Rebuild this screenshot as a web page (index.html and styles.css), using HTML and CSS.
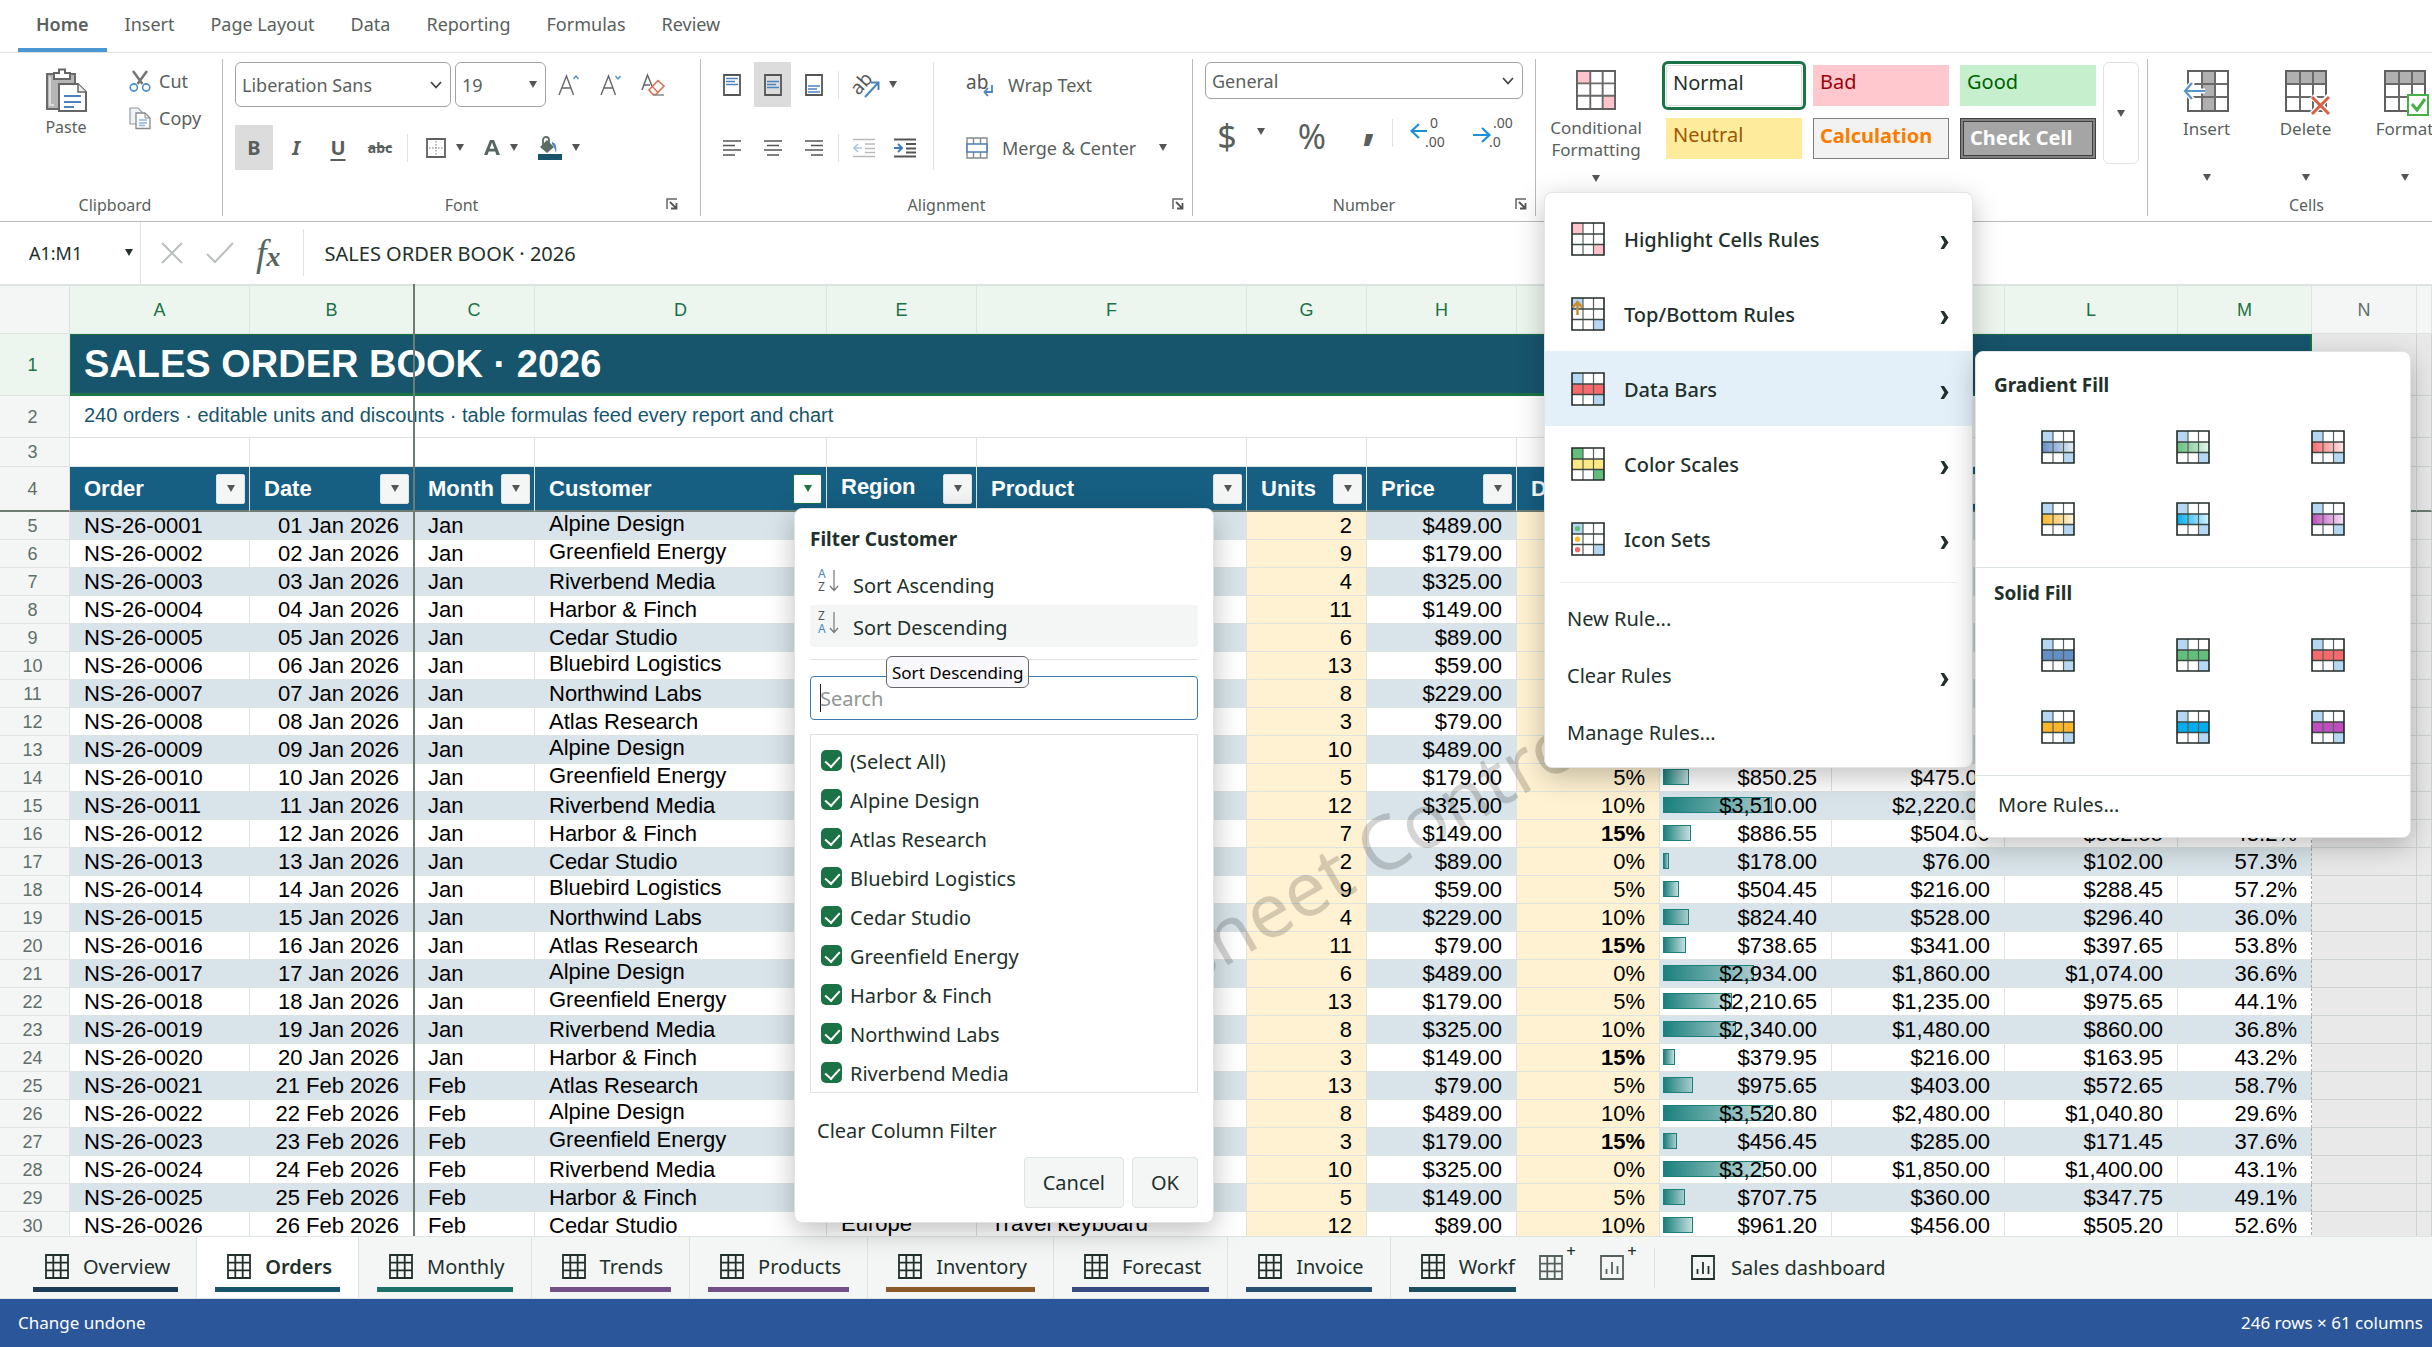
FILE: index.html
```html
<!DOCTYPE html>
<html lang="en">
<head>
<meta charset="utf-8">
<title>Sales order book</title>
<link rel="stylesheet" href="styles.css">
</head>
<body>
<svg class="defs" aria-hidden="true">
  <defs>
    <symbol id="sheet" viewBox="0 0 24 25"><path d="M1 1h22v23H1zM1 8.700h22M1 16.300h22M8.300 1v23M15.700 1v23" fill="none" stroke="currentColor" stroke-width="1.800"/></symbol>
    <symbol id="chart" viewBox="0 0 24 25"><path d="M1 1h22v23H1z" fill="none" stroke="currentColor" stroke-width="1.800"/><path d="M6.500 19v-5M12 19V7M17.500 19v-8" stroke="currentColor" stroke-width="1.800"/></symbol>
    <symbol id="rules" viewBox="0 0 34 34"><path d="M12 1v32M22.500 1v32" stroke="#56605c" stroke-width="1.200" fill="none"/><path d="M1 12h32M1 22.500h32" stroke="#3b4743" stroke-width="1.600" fill="none"/><path d="M1 1h32v32H1z" fill="none" stroke="#222b28" stroke-width="1.600"/></symbol>
    <symbol id="cells" viewBox="0 0 42 42"><path d="M15 1v40M28 1v40M1 14h40M1 27h40" stroke="#6a6a6a" stroke-width="2" fill="none"/><path d="M1 1h40v40H1z" fill="none" stroke="#606060" stroke-width="2"/></symbol>
    <symbol id="launch" viewBox="0 0 12 12"><path d="M1 11V1h10" fill="none" stroke="#666" stroke-width="1.500"/><path d="M4 4l6 6M10.500 5v5.500H5" fill="none" stroke="#555" stroke-width="1.800"/></symbol>
    <symbol id="down" viewBox="0 0 12 8"><path d="M1 1l5 5.500L11 1" fill="none" stroke="#444" stroke-width="1.800"/></symbol>
    <symbol id="next" viewBox="0 0 9 13"><path d="M0.500 0h3.500l4.500 6.500L4 13H0.500l3.800-6.500z" fill="#22302b"/></symbol>
  </defs>
</svg>

<div class="app">
  <nav class="tabs" aria-label="Ribbon">
    <button class="tab active">Home</button>
    <button class="tab">Insert</button>
    <button class="tab">Page Layout</button>
    <button class="tab">Data</button>
    <button class="tab">Reporting</button>
    <button class="tab">Formulas</button>
    <button class="tab">Review</button>
  </nav>

  <div class="ribbon">
    <section class="group clipboard">
      <div class="tools">
        <button class="big paste">
          <svg width="42" height="44" viewBox="0 0 42 44"><path d="M2 6h28v35H2z" fill="#b5b5b5" stroke="#6a6a6a" stroke-width="2"/><path d="M5 9v28h4" fill="none" stroke="#dcdcdc" stroke-width="2"/><path d="M9 11V5h5V1.500h6V5h5v6z" fill="#fff" stroke="#666" stroke-width="2"/><path d="M14 16h19l8 8v19H14z" fill="#fff" stroke="#666" stroke-width="2"/><path d="M33 16v8h8" fill="#ececec" stroke="#666" stroke-width="1.500"/><path d="M19 28h17M19 34h17M19 39h10" stroke="#4a84bd" stroke-width="2"/></svg>
          <span>Paste</span>
        </button>
        <div class="stack">
          <button class="flat"><svg width="22" height="22" viewBox="0 0 22 22"><path d="M4 1l9.500 13M18 1L8.500 14" stroke="#777" stroke-width="2.600"/><circle cx="4.800" cy="17.500" r="3.600" fill="#fff" stroke="#4a8acb" stroke-width="1.600"/><circle cx="17.200" cy="17.500" r="3.600" fill="#fff" stroke="#4a8acb" stroke-width="1.600"/></svg><span>Cut</span></button>
          <button class="flat"><svg width="22" height="22" viewBox="0 0 22 22"><path d="M1 1h8l4 4v12H1z" fill="#eef3f7" stroke="#999" stroke-width="1.200"/><path d="M7 6h9l5 5v10.500H7z" fill="#fff" stroke="#888" stroke-width="1.300"/><path d="M16 6v5h5" fill="none" stroke="#888"/><path d="M10 13h8M10 16h8M10 18.500h6" stroke="#8db4e0" stroke-width="1.300"/></svg><span>Copy</span></button>
        </div>
      </div>
      <div class="caption"><span>Clipboard</span></div>
    </section>

    <section class="group font">
      <div class="tools rows">
        <div class="row">
          <span class="pick name"><select aria-label="Font name"><option>Liberation Sans</option></select><svg class="arrow" width="12" height="8"><use href="#down"/></svg></span>
          <span class="pick size"><select aria-label="Font size"><option>19</option></select><i class="caret arrow"></i></span>
          <button class="icon" aria-label="Grow font"><svg width="22" height="22" viewBox="0 0 22 22"><path d="M1 21L8.500 2 15.500 21M3.500 14h10" fill="none" stroke="#666" stroke-width="1.400"/><path d="M15.500 5L18 2l2.500 3" fill="none" stroke="#4a8acb" stroke-width="1.300"/></svg></button>
          <button class="icon" aria-label="Shrink font"><svg width="22" height="22" viewBox="0 0 22 22"><path d="M1 21L8.500 2 15.500 21M3.500 14h10" fill="none" stroke="#666" stroke-width="1.400"/><path d="M15.500 2L18 5l2.500-3" fill="none" stroke="#4a8acb" stroke-width="1.300"/></svg></button>
          <button class="icon" aria-label="Clear formatting"><svg width="24" height="22" viewBox="0 0 24 22"><path d="M1 16L6.500 1 11 12M3 11h6" fill="none" stroke="#666" stroke-width="1.500"/><path d="M8 16l9-9.500 6 5.500-8 8.500h-3z" fill="#fff" stroke="#dd6a4c" stroke-width="1.500"/><path d="M11 12l5.500 6" stroke="#dd6a4c" stroke-width="1.300"/><path d="M12 21h11" stroke="#888" stroke-width="1.500"/></svg></button>
        </div>
        <div class="row">
          <button class="icon on" aria-label="Bold"><b>B</b></button>
          <button class="icon" aria-label="Italic"><b><em>I</em></b></button>
          <button class="icon" aria-label="Underline"><b class="under">U</b></button>
          <button class="icon" aria-label="Strikethrough"><b class="strike">abc</b></button>
          <i class="rule"></i>
          <button class="split" aria-label="Borders"><svg width="20" height="20" viewBox="0 0 20 20"><path d="M1 1h18v18H1z" fill="none" stroke="#606060" stroke-width="1.800"/><path d="M10 3v15M3 10h15" stroke="#777" stroke-dasharray="1.500 1.500"/></svg><i class="caret"></i></button>
          <button class="split" aria-label="Font color"><svg width="16" height="20" viewBox="0 0 16 20"><path d="M0 17L6 2h4l6 15h-3.600l-1.200-3.400H4.700L3.500 17zM5.700 10.800h4.600L8 4.600z" fill="#56665f"/></svg><i class="caret"></i></button>
          <button class="split" aria-label="Fill color"><svg width="24" height="24" viewBox="0 0 24 24"><path d="M2 11l7-7 7 7-7 6z" fill="#5d6b65"/><path d="M5 9V4a3 3 0 0 1 6 0v6" fill="none" stroke="#5d6b65" stroke-width="1.800"/><path d="M14 6c4 1 5 5 4 11-1-3-2-7-4-9z" fill="#4a84c8"/><path d="M0 18h24v6H0z" fill="#17556d"/></svg><i class="caret"></i></button>
        </div>
      </div>
      <div class="caption"><span>Font</span><svg width="12" height="12"><use href="#launch"/></svg></div>
    </section>

    <section class="group align">
      <div class="tools">
        <div class="rows">
          <div class="row">
            <button class="icon" aria-label="Top align"><svg width="18" height="22" viewBox="0 0 18 22"><path d="M1 1h16v20H1z" fill="#fff" stroke="#555" stroke-width="1.800"/><path d="M3 4.500h12M3 7.500h9M3 10.500h12" stroke="#4a84bd" stroke-width="1.500"/></svg></button>
            <button class="icon on" aria-label="Middle align"><svg width="18" height="22" viewBox="0 0 18 22"><path d="M1 1h16v20H1z" fill="none" stroke="#555" stroke-width="1.800"/><path d="M3 7.500h12M3 10.500h9M3 13.500h12" stroke="#4a84bd" stroke-width="1.500"/></svg></button>
            <button class="icon" aria-label="Bottom align"><svg width="18" height="22" viewBox="0 0 18 22"><path d="M1 1h16v20H1z" fill="#fff" stroke="#555" stroke-width="1.800"/><path d="M3 12h12M3 15h9M3 18h12" stroke="#4a84bd" stroke-width="1.500"/></svg></button>
            <i class="rule"></i>
            <button class="split" aria-label="Orientation"><svg width="26" height="26" viewBox="0 0 26 26"><text x="2" y="22" transform="rotate(-48 6 19)" class="glyph">ab</text><path d="M12 25L25 11M18 10.500h7.500V18" fill="none" stroke="#4a84bd" stroke-width="2"/></svg><i class="caret"></i></button>
          </div>
          <div class="row">
            <button class="icon" aria-label="Align left"><svg width="18" height="18" viewBox="0 0 18 18"><path d="M0 2h18M0 6.500h12M0 11h18M0 16h12" stroke="#555" stroke-width="1.700"/></svg></button>
            <button class="icon" aria-label="Center"><svg width="18" height="18" viewBox="0 0 18 18"><path d="M0 2h18M3 6.500h12M0 11h18M3 16h12" stroke="#555" stroke-width="1.700"/></svg></button>
            <button class="icon" aria-label="Align right"><svg width="18" height="18" viewBox="0 0 18 18"><path d="M0 2h18M6 6.500h12M0 11h18M6 16h12" stroke="#555" stroke-width="1.700"/></svg></button>
            <i class="rule"></i>
            <button class="icon" disabled aria-label="Decrease indent"><svg width="22" height="20" viewBox="0 0 22 20"><path d="M0 1.500h22M12 6h10M12 10.500h10M12 14.500h10M0 18.500h22" stroke="#bbb" stroke-width="1.600"/><path d="M9 10H1.500M5 6l-4 4 4 4" fill="none" stroke="#a9c6e2" stroke-width="1.600"/></svg></button>
            <button class="icon" aria-label="Increase indent"><svg width="22" height="20" viewBox="0 0 22 20"><path d="M0 1.500h22M12 6h10M12 10.500h10M12 14.500h10M0 18.500h22" stroke="#555" stroke-width="1.800"/><path d="M0 10h7.500M4 6l4 4-4 4" fill="none" stroke="#3a78bb" stroke-width="1.900"/></svg></button>
          </div>
        </div>
        <i class="rule tall"></i>
        <div class="rows wide">
          <button class="flat wrap"><svg width="28" height="26" viewBox="0 0 28 26"><text x="0" y="17" class="glyph">ab</text><path d="M26 13v7h-6M22 16l-3.500 4 3.500 4" fill="none" stroke="#4a84bd" stroke-width="1.800"/></svg><span>Wrap Text</span></button>
          <button class="flat"><svg width="22" height="22" viewBox="0 0 22 22"><path d="M1 1h20v20H1zM7.500 1v20M14.500 1v20" fill="none" stroke="#888" stroke-width="1.400"/><path d="M1 7h20v8H1z" fill="#fff" stroke="#4f7fb5" stroke-width="1.600"/></svg><span>Merge &amp; Center</span><i class="caret"></i></button>
        </div>
      </div>
      <div class="caption"><span>Alignment</span><svg width="12" height="12"><use href="#launch"/></svg></div>
    </section>

    <section class="group number">
      <div class="tools rows">
        <span class="pick format"><select aria-label="Number format"><option>General</option></select><svg class="arrow" width="12" height="8"><use href="#down"/></svg></span>
        <div class="row">
          <button class="sym">$</button><i class="caret"></i>
          <button class="sym">%</button>
          <button class="sym comma">,</button>
          <i class="rule"></i>
          <button class="dec" aria-label="Increase decimal"><svg width="36" height="34" viewBox="0 0 36 34"><path d="M17 16H2M9 9l-7.500 7L9 23" fill="none" stroke="#1e90d8" stroke-width="2.200"/><text x="20" y="13" class="tiny">0</text><text x="15" y="32" class="tiny">.00</text></svg></button>
          <button class="dec" aria-label="Decrease decimal"><svg width="40" height="34" viewBox="0 0 40 34"><path d="M0 20h15M9 13l7.500 7L9 27" fill="none" stroke="#1e90d8" stroke-width="2.200"/><text x="20" y="13" class="tiny">.00</text><text x="16" y="32" class="tiny">.0</text></svg></button>
        </div>
      </div>
      <div class="caption"><span>Number</span><svg width="12" height="12"><use href="#launch"/></svg></div>
    </section>

    <section class="group styles">
      <button class="big cond">
        <svg width="40" height="42" viewBox="0 0 42 42"><path d="M1 1h14v13H1zM28 27h13v14H28z" fill="#ffc3cb"/><use href="#cells"/></svg>
        <span>Conditional<br>Formatting</span><i class="caret"></i>
      </button>
      <div class="gallery">
        <button class="chip normal"><span>Normal</span></button>
        <button class="chip bad"><span>Bad</span></button>
        <button class="chip good"><span>Good</span></button>
        <button class="chip neutral"><span>Neutral</span></button>
        <button class="chip calc"><span>Calculation</span></button>
        <button class="chip check"><span>Check Cell</span></button>
      </div>
      <button class="more" aria-label="More styles"><i class="caret"></i></button>
    </section>

    <section class="group cellops">
      <div class="tools">
        <button class="big op"><svg width="48" height="46" viewBox="-4 0 48 46"><path d="M15 1h13v40H15z" fill="#b0b0b0"/><use href="#cells" width="42" height="42"/><path d="M18 21H-1M6 12l-8 9 8 9" fill="none" stroke="#fff" stroke-width="5"/><path d="M18 21H-1M5 13l-7 8 7 8" fill="none" stroke="#5b93cf" stroke-width="2.200"/></svg><span>Insert</span><i class="caret"></i></button>
        <button class="big op"><svg width="48" height="46" viewBox="-3 0 48 46"><path d="M1 1h40v13H1z" fill="#b0b0b0"/><use href="#cells" width="42" height="42"/><path d="M27 26l17 18M44 26L27 44" stroke="#fff" stroke-width="6"/><path d="M27 27l17 17M44 27L27 44" stroke="#d95f43" stroke-width="3"/></svg><span>Delete</span><i class="caret"></i></button>
        <button class="big op"><svg width="48" height="46" viewBox="-3 0 48 46"><path d="M1 1h40v13H1z" fill="#b0b0b0"/><use href="#cells" width="42" height="42"/><path d="M24 25h20v20H24z" fill="#fff" stroke="#45b045" stroke-width="2"/><path d="M28 34l5 6 8-11" fill="none" stroke="#45b045" stroke-width="3"/></svg><span>Format</span><i class="caret"></i></button>
      </div>
      <div class="caption"><span>Cells</span></div>
    </section>
  </div>

  <div class="formula">
    <label class="namebox"><input aria-label="Name box" value="A1:M1"><i class="caret"></i></label>
    <div class="fx">
      <button aria-label="Cancel entry"><svg width="24" height="22" viewBox="0 0 24 22"><path d="M2 1l20 20M22 1L2 21" stroke="#b9bfbc" stroke-width="2"/></svg></button>
      <button aria-label="Confirm entry"><svg width="28" height="22" viewBox="0 0 28 22"><path d="M1 12l8 8L27 1" fill="none" stroke="#b9bfbc" stroke-width="2"/></svg></button>
      <button class="fn" aria-label="Insert function"><em>f</em><sub>x</sub></button>
    </div>
    <input class="entry" aria-label="Formula" value="SALES ORDER BOOK · 2026">
  </div>

  <main class="sheet">
    <table class="grid">
      <colgroup><col class="w-head"><col class="w-a"><col class="w-b"><col class="w-c"><col class="w-d"><col class="w-e"><col class="w-f"><col class="w-g"><col class="w-h"><col class="w-i"><col class="w-j"><col class="w-k"><col class="w-k"><col class="w-m"><col class="w-n"><col></colgroup>
      <thead><tr class="letters"><th class="corner"></th><th>A</th><th>B</th><th>C</th><th>D</th><th>E</th><th>F</th><th>G</th><th>H</th><th>I</th><th>J</th><th>K</th><th>L</th><th>M</th><th class="off">N</th><th class="off"></th></tr></thead>
      <tbody id="rows">
        <tr class="r1"><th class="sel">1</th><td colspan="13" class="title">SALES ORDER BOOK · 2026</td><td class="out"></td><td class="out"></td></tr>
        <tr class="r2"><th>2</th><td colspan="13" class="sub">240 orders · editable units and discounts · table formulas feed every report and chart</td><td class="out"></td><td class="out"></td></tr>
        <tr class="r3"><th>3</th><td></td><td></td><td></td><td></td><td></td><td></td><td></td><td></td><td></td><td></td><td></td><td></td><td></td><td class="out"></td><td class="out"></td></tr>
      </tbody>
    </table>
    <i class="freeze"></i>
    <svg class="watermark"><text x="977" y="826" transform="rotate(-30 977 826)">Spreadsheet Control</text></svg>
  </main>

  <nav class="sheets" aria-label="Sheets">
    <div class="strip" id="strip"></div>
    <button class="add" aria-label="Add sheet"><svg width="24" height="25"><use href="#sheet"/></svg><sup>+</sup></button>
    <button class="add" aria-label="Add chart sheet"><svg width="24" height="25"><use href="#chart"/></svg><sup>+</sup></button>
    <i class="rule"></i>
    <button class="dash"><svg width="24" height="25"><use href="#chart"/></svg><span>Sales dashboard</span></button>
  </nav>

  <footer class="status"><span>Change undone</span><span>246 rows × 61 columns</span></footer>

  <form class="filter popup">
    <h2>Filter Customer</h2>
    <button type="button" class="sort"><svg width="22" height="24" viewBox="0 0 22 24"><text x="0" y="9" class="az blue">A</text><text x="0" y="22" class="az">Z</text><path d="M16 1v20M12 17l4 4.500 4-4.500" fill="none" stroke="#777" stroke-width="1.200"/></svg>Sort Ascending</button>
    <button type="button" class="sort hover"><svg width="22" height="24" viewBox="0 0 22 24"><text x="0" y="9" class="az">Z</text><text x="0" y="22" class="az blue">A</text><path d="M16 1v20M12 17l4 4.500 4-4.500" fill="none" stroke="#777" stroke-width="1.200"/></svg>Sort Descending</button>
    <hr>
    <input class="search" type="text" placeholder="Search" aria-label="Search">
    <div class="list" id="list"></div>
    <button type="button" class="clear">Clear Column Filter</button>
    <div class="actions"><button type="button">Cancel</button><button type="button">OK</button></div>
    <div class="tip" role="tooltip">Sort Descending</div>
  </form>

  <div class="cfmenu popup" role="menu">
    <button class="rich" role="menuitem"><svg width="34" height="34" viewBox="0 0 34 34"><path d="M0 0h34v34H0z" fill="#fff"/><path d="M1 1h11v11H1zM22.500 22.500H33V33H22.500z" fill="#ffc3cb"/><use href="#rules"/></svg><span>Highlight Cells Rules</span><svg class="go" width="9" height="13"><use href="#next"/></svg></button>
    <button class="rich" role="menuitem"><svg width="34" height="34" viewBox="0 0 34 34"><path d="M0 0h34v34H0z" fill="#fff"/><path d="M1 1h11v11H1zM22.500 22.500H33V33H22.500z" fill="#b5d7f1"/><use href="#rules"/><path d="M6.500 18V6M1.500 10.500l5-5.500 5 5.500" fill="none" stroke="#c98a2b" stroke-width="2.400"/></svg><span>Top/Bottom Rules</span><svg class="go" width="9" height="13"><use href="#next"/></svg></button>
    <button class="rich open" role="menuitem"><svg width="34" height="34" viewBox="0 0 34 34"><path d="M0 0h34v34H0z" fill="#fff"/><path d="M1 1h11v11H1zM22.500 22.500H33V33H22.500z" fill="#b5d7f1"/><path d="M1 12h32v10.500H1z" fill="#f8696b"/><use href="#rules"/></svg><span>Data Bars</span><svg class="go" width="9" height="13"><use href="#next"/></svg></button>
    <button class="rich" role="menuitem"><svg width="34" height="34" viewBox="0 0 34 34"><path d="M0 0h34v34H0z" fill="#fff"/><path d="M1 1h11v11H1zM22.500 22.500H33V33H22.500z" fill="#63be7b"/><path d="M1 12h32v10.500H1z" fill="#ffe985"/><use href="#rules"/></svg><span>Color Scales</span><svg class="go" width="9" height="13"><use href="#next"/></svg></button>
    <button class="rich" role="menuitem"><svg width="34" height="34" viewBox="0 0 34 34"><path d="M0 0h34v34H0z" fill="#fff"/><path d="M1 1h11v11H1zM22.500 22.500H33V33H22.500z" fill="#b5d7f1"/><use href="#rules"/><circle cx="6.500" cy="6.500" r="2.600" fill="#63be7b"/><circle cx="6.500" cy="17.200" r="2.600" fill="#ffb628"/><circle cx="6.500" cy="27.700" r="2.600" fill="#f8696b"/></svg><span>Icon Sets</span><svg class="go" width="9" height="13"><use href="#next"/></svg></button>
    <hr>
    <button class="plain" role="menuitem"><span>New Rule...</span></button>
    <button class="plain" role="menuitem"><span>Clear Rules</span><svg class="go" width="9" height="13"><use href="#next"/></svg></button>
    <button class="plain" role="menuitem"><span>Manage Rules...</span></button>
  </div>

  <div class="bars popup">
    <h3>Gradient Fill</h3>
    <div class="swatches" id="gradient"></div>
    <h3>Solid Fill</h3>
    <div class="swatches" id="solid"></div>
    <button class="morerules">More Rules...</button>
  </div>
</div>
<script src="app.js"></script>
</body>
</html>
```
FILE: styles.css
```css
* { box-sizing: border-box; }
html, body { margin: 0; height: 100%; }
body, button, input, select { font-family: "Noto Sans", "Open Sans", sans-serif; font-size: 18px; color: #5a5f5d; }
button { border: 0; background: none; padding: 0; margin: 0; display: flex; align-items: center; white-space: nowrap; }
input, select { margin: 0; border: 0; background: none; outline: 0; }
svg { display: block; flex: none; overflow: visible; }
.defs { position: absolute; width: 0; height: 0; }

.app { position: relative; display: flex; flex-direction: column; height: 100vh; overflow: hidden; background: #fff; }

.caret { display: block; flex: none; width: 0; height: 0; border: 4px solid transparent; border-top: 7px solid #555; border-bottom: 0; }
.rule { display: block; flex: none; width: 1px; height: 28px; background: #dde3e0; }

/* Ribbon tabs */
.tabs { flex: none; display: flex; height: 53px; padding-left: 18px; border-bottom: 1px solid #dde3e0; }
.tab { padding: 0 18px 4px; }
.tab.active { font-weight: 600; padding-bottom: 0; border-bottom: 4px solid #4a97d3; }

/* Ribbon */
.ribbon { flex: none; display: flex; height: 169px; padding: 6px 0 5px; border-bottom: 1px solid #b9bcbb; overflow: hidden; }
.group { flex: none; display: flex; flex-direction: column; justify-content: space-between; padding: 3px 12px 0; border-right: 1px solid #b9bcbb; }
.tools { display: flex; }
.rows { display: flex; flex-direction: column; gap: 18px; }
.row { display: flex; align-items: center; gap: 4px; }
.caption { display: grid; grid-template-columns: 1fr auto 1fr; align-items: center; height: 22px; font-size: 16px; margin: 0 -4px; }
.caption span { grid-column: 2; }
.caption svg { justify-self: end; margin-bottom: 2px; }

.big { flex-direction: column; justify-content: flex-start; font-size: 16px; line-height: 22px; text-align: center; }
.flat { gap: 8px; }
.clipboard { width: 223px; }
.clipboard .caption { margin: 0 -8px 0 0; }
.paste { width: 100px; gap: 4px; padding: 6px 0 0 8px; }
.stack { display: flex; flex-direction: column; padding-left: 17px; }
.stack .flat { height: 37px; }

.font { width: 478px; }
.font .caption { margin-right: 10px; margin-left: 10px; }
.pick { position: relative; display: flex; height: 45px; border: 1px solid #9fa3a1; border-radius: 6px; }
.pick select { appearance: none; width: 100%; padding: 0 6px; }
.pick .arrow { position: absolute; right: 8px; top: 18px; }
.name { width: 216px; }
.size { width: 91px; }
.icon { width: 38px; height: 45px; justify-content: center; font-size: 20px; }
.icon.on { background: #dcdcdc; }
.under { text-decoration: underline; text-decoration-thickness: 2px; text-underline-offset: 4px; }
.strike { font-size: 14px; text-decoration: line-through; }
.split { height: 45px; gap: 10px; padding: 0 8px; }
.font .rule { margin: 0 6px 0 4px; }

.align { width: 492px; }
.align .rows .rule { margin: 0 2px; }
.align .rule.tall { height: 108px; margin: 0 20px 0 10px; }
.align .icon { width: 37px; }
.align .split { padding: 0 8px; }
.align .flat { height: 45px; gap: 14px; }
.align .flat .caret { margin-left: 9px; }
.align .wide { padding-left: 12px; }
.glyph { font-size: 19px; fill: #555; }
.tiny { font-size: 14px; fill: #555; }

.number { width: 343px; }
.format { height: 37px; }
.format .arrow { top: 14px; }
.number .rows { gap: 0; }
.number .row { height: 74px; gap: 0; }
.sym { font-size: 34px; line-height: 60px; width: 32px; margin-left: 6px; justify-content: center; }
.number .row .caret { margin: 0 25px 10px 14px; }
.comma { font-weight: 700; font-size: 48px; margin: 0 7px 28px 25px; }
.number .row .rule { margin: 0 17px 6px 0; }
.dec { margin: 0 27px 8px 0; }
.dec + .dec { margin-right: 0; }

.styles { flex-direction: row; justify-content: flex-start; width: 612px; padding: 3px 9px 0 7px; }
.cond { flex: none; width: 106px; gap: 6px; padding-top: 7px; margin-right: 17px; font-size: 17px; }
.cond .caret { margin-top: 8px; }
.gallery { display: grid; grid-template-columns: repeat(3, 136px); grid-template-rows: 41px 41px; gap: 12px 11px; padding: 3px 0; }
.gallery + .more { margin-left: 7px; }
.chip { font-size: 20px; align-items: flex-start; padding: 0 7px; line-height: 33px; height: 41px; }
.normal { color: #22302b; outline: 3px solid #1b7245; outline-offset: 1px; border: 1px solid #d6dcd9; border-radius: 2px; padding: 0 6px; }
.bad { background: #ffc7ce; color: #9c0006; }
.good { background: #c6efce; color: #006100; }
.neutral { background: #ffeb9c; color: #9c5700; }
.calc { background: #f2f2f2; color: #fa7d00; border: 1px solid #7f7f7f; font-weight: 700; padding: 0 6px; }
.check { background: #a5a5a5; color: #fff; border: 1px solid #3f3f3f; box-shadow: inset 0 0 0 2px #808080, inset 0 0 0 3px #3f3f3f; font-weight: 700; padding: 2px 9px; }
.more { flex: none; width: 36px; height: 102px; justify-content: center; border: 1px solid #dde3e0; border-radius: 6px; }

.cellops { width: 318px; padding: 3px 9px 0; }
.op { width: 99px; gap: 2px; padding-top: 8px; font-size: 17px; }
.op .caret { margin-top: 32px; }

/* Formula bar */
.formula { flex: none; display: flex; align-items: stretch; height: 62px; color: #22302b; }
.namebox { display: flex; align-items: center; width: 141px; padding: 0 8px 0 29px; border-right: 1px solid #dde3e0; }
.namebox input { width: 96px; padding: 0; color: #22302b; }
.namebox .caret { border-top-color: #22302b; margin-bottom: 2px; }
.fx { display: flex; align-items: center; gap: 22px; margin: 7px 0 8px; padding: 0 22px 0 19px; border-right: 1px solid #dde3e0; }
.fn { font: italic 700 30px/44px "Liberation Serif", serif; color: #56665f; }
.fn em { font-weight: 400; font-size: 38px; }
.fn sub { font-size: 28px; line-height: 20px; padding-top: 8px; }
.entry { flex: 1; padding: 1px 21px 0; font-size: 20px; color: #22302b; }

/* Grid */
.sheet { position: relative; flex: 1; min-height: 0; overflow: hidden; }
.grid { width: 100%; table-layout: fixed; border-collapse: separate; border-spacing: 0; font-family: "Liberation Sans", Arial, sans-serif; font-size: 22px; line-height: 22px; color: #000; }
.w-head { width: 70px; } .w-a { width: 180px; } .w-b { width: 164px; } .w-c { width: 121px; } .w-d { width: 292px; }
.w-e { width: 150px; } .w-f { width: 270px; } .w-g { width: 120px; } .w-h { width: 150px; } .w-i { width: 143px; }
.w-j { width: 172px; } .w-k { width: 173px; } .w-m { width: 134px; } .w-n { width: 105px; }
.grid td, .grid th { height: 28px; padding: 0 14px; border: 0 solid #dde3e0; border-width: 0 1px 1px 0; white-space: nowrap; overflow: hidden; text-align: left; }
.grid th { padding: 0 4px 0 0; text-align: center; font-weight: 400; font-size: 18px; background: #f4f6f6; color: #5f6f68; }
.grid .letters th { height: 50px; padding: 0; border-top-width: 2px; background: #edf6ee; color: #1b7245; }
.grid .letters .corner, .grid .letters .off { background: #f4f6f6; color: #5f6f68; }
.grid .sel { background: #edf6ee; color: #1b7245; }
.grid .title { height: 62px; padding-left: 13px; background: #17556d; color: #fff; font-size: 38px; font-weight: 700; border: 1px solid #1b7245; border-bottom-width: 3px; border-right-width: 2px; }
.grid .sub { height: 42px; padding-bottom: 4px; font-size: 20px; color: #17556d; }
.grid .r3 td { height: 29px; }
.grid .out { background: #e9e9e9; border-color: #cdd3d1; }
.grid .num { text-align: right; }
.grid .band td { background: #d8e4e9; }
.grid .input, .grid .band .input { background: #fff2d2; }
.grid .band .out { background: #e9e9e9; }
.grid .raised { padding-bottom: 4px; }
.grid .edge { border-right: 1px dashed #a8adab; }
.grid .heads td, .grid .heads th { height: 45px; border-bottom: 2px solid #6d7b72; }
.grid .heads .field { background: #165f82; color: #fff; font-weight: 700; padding-right: 4px; }
.field div { display: flex; justify-content: space-between; align-items: center; }
.field button { width: 29px; height: 30px; justify-content: center; border: 1px solid #dde3e0; border-radius: 2px; background: #f4f6f6; }
.field.raised { padding-bottom: 0; }
.field.raised span { padding-bottom: 4px; }
.field .live { border: 1px solid #1b7245; background: #fff; }
.field .live .caret { border-top-color: #1b7245; }
.grid .barcell { position: relative; }
.barcell i { position: absolute; left: 3px; top: 5px; height: 16px; border: 1px solid #1b807d; background: linear-gradient(90deg, #1b807d, rgba(27, 128, 125, .25)); }
.barcell span { position: relative; }
.freeze { position: absolute; left: 413px; top: 0; bottom: 0; width: 2px; background: #6d7b72; }
.watermark { position: absolute; left: 0; top: 0; width: 100%; height: 100%; pointer-events: none; }
.watermark text { font-size: 75px; fill: rgba(0, 0, 0, .17); }

/* Sheet tabs */
.sheets { flex: none; display: flex; align-items: center; height: 63px; background: #f4f6f6; border: solid #dde3e0; border-width: 1px 0; color: #22302b; }
.sheets button { font-size: 20px; color: #22302b; }
.strip { display: flex; height: 100%; max-width: 1516px; padding-left: 15px; overflow: hidden; }
.strip button { flex: none; padding: 0 18px 6px; border-right: 1px solid #dde3e0; }
.strip .current { background: #fff; font-weight: 600; }
.mark { display: flex; align-items: center; gap: 14px; height: 100%; padding: 9px 8px 0 12px; border-bottom: 5px solid; }
.mark span { color: #22302b; }
.mark svg { color: #22302b; }
.add { margin-left: 23px; }
.add + .add { margin-left: 21px; }
.add svg { color: #56615d; }
.add sup { width: 16px; height: 48px; line-height: 14px; font-weight: 500; }
.sheets .rule { height: 40px; margin: 0 36px 0 14px; }
.dash { gap: 16px; }

.status { flex: none; display: flex; justify-content: space-between; align-items: center; height: 48px; padding: 0 9px 2px 18px; background: #2b579a; color: #fff; font-size: 17px; }

/* Popups */
.popup { position: absolute; background: #fff; border: 1px solid #e0e4e3; border-radius: 8px; box-shadow: 0 8px 28px rgba(0, 0, 0, .25); color: #22302b; }
.popup button { color: #22302b; font-size: 20px; }
.popup hr { border: 0; border-top: 1px solid #dde3e0; margin: 0; }

.filter { left: 794px; top: 508px; width: 420px; height: 715px; padding: 10px 15px; }
.filter h2 { margin: 0 0 4px; font-size: 19px; line-height: 40px; height: 40px; }
.sort { width: 100%; height: 42px; gap: 13px; padding: 2px 8px 0; border-radius: 4px; }
.sort svg { margin-bottom: 8px; }
.sort.hover { background: #f4f6f6; }
.az { font-size: 12px; fill: #555; }
.az.blue { fill: #4a84bd; }
.filter hr { margin: 12px 0 16px; }
.search { display: block; width: 100%; height: 44px; padding: 0 9px; border: 1px solid #3b7bb0; border-radius: 4px; font-size: 20px; background: linear-gradient(#222, #222) 9px center / 1px 28px no-repeat; }
.search::placeholder { color: #8f9694; }
.list { margin: 14px 0; padding: 7px 10px 0; height: 359px; border: 1px solid #dde3e0; overflow: hidden; }
.list label { display: flex; align-items: center; gap: 8px; height: 39px; font-size: 20px; }
.list input { appearance: none; position: relative; width: 21px; height: 21px; border-radius: 5px; background: #1b7245; margin-bottom: 2px; }
.list input::before { content: ""; position: absolute; left: 7px; top: 3px; width: 7px; height: 12px; border: solid #fff; border-width: 0 2px 2px 0; transform: rotate(42deg); }
.clear { height: 46px; padding: 0 7px; }
.actions { display: flex; justify-content: flex-end; gap: 8px; margin-top: 4px; }
.actions button { height: 51px; padding: 0 18px; border: 1px solid #dde3e0; border-radius: 4px; background: #f4f6f6; }
.tip { position: absolute; left: 91px; top: 147px; padding: 0 5px; height: 32px; line-height: 31px; border: 1px solid #666; border-radius: 6px; background: #f9f8fc; color: #000; font-size: 17px; white-space: nowrap; }

.cfmenu { left: 1544px; top: 192px; width: 429px; padding: 8px 0 6px; }
.cfmenu button { width: 100%; }
.rich { height: 75px; padding: 0 23px 0 26px; gap: 19px; }
.cfmenu .rich { font-weight: 500; }
.rich.open { background: #e4f0f9; }
.cfmenu span { flex: 1; text-align: left; }
.cfmenu .rich span { padding-top: 2px; }
.cfmenu .go { margin-top: 8px; }
.cfmenu hr { margin: 6px 15px 7px; border-color: #eff1f0; }
.plain { height: 57px; padding: 0 23px 0 22px; }

.bars { left: 1975px; top: 351px; width: 436px; padding-top: 8px; }
.bars h3 { margin: 0; padding: 0 18px; font-size: 19px; line-height: 51px; }
.swatches { display: grid; grid-template-columns: repeat(3, 1fr); padding: 0 15px 12px; border-bottom: 1px solid #dde3e0; }
.swatches button { height: 72px; justify-content: center; }
.morerules { height: 61px; padding: 0 22px 4px; }
```
FILE: app.js
```js
const rows = [
  ['Alpine Design', 2, 489, '', '', '', '', ''],
  ['Greenfield Energy', 9, 179, '', '', '', '', ''],
  ['Riverbend Media', 4, 325, '', '', '', '', ''],
  ['Harbor & Finch', 11, 149, '', '', '', '', ''],
  ['Cedar Studio', 6, 89, '', '', '', '', ''],
  ['Bluebird Logistics', 13, 59, '', '', '', '', ''],
  ['Northwind Labs', 8, 229, '', '', '', '', ''],
  ['Atlas Research', 3, 79, '', '', '', '', ''],
  ['Alpine Design', 10, 489, '', '', '', '', ''],
  ['Greenfield Energy', 5, 179, 5, 850.25, 475, '', ''],
  ['Riverbend Media', 12, 325, 10, 3510, 2220, '', ''],
  ['Harbor & Finch', 7, 149, 15, 886.55, 504, 382.55, 43.2],
  ['Cedar Studio', 2, 89, 0, 178, 76, 102, 57.3],
  ['Bluebird Logistics', 9, 59, 5, 504.45, 216, 288.45, 57.2],
  ['Northwind Labs', 4, 229, 10, 824.4, 528, 296.4, 36],
  ['Atlas Research', 11, 79, 15, 738.65, 341, 397.65, 53.8],
  ['Alpine Design', 6, 489, 0, 2934, 1860, 1074, 36.6],
  ['Greenfield Energy', 13, 179, 5, 2210.65, 1235, 975.65, 44.1],
  ['Riverbend Media', 8, 325, 10, 2340, 1480, 860, 36.8],
  ['Harbor & Finch', 3, 149, 15, 379.95, 216, 163.95, 43.2],
  ['Atlas Research', 13, 79, 5, 975.65, 403, 572.65, 58.7],
  ['Alpine Design', 8, 489, 10, 3520.8, 2480, 1040.8, 29.6],
  ['Greenfield Energy', 3, 179, 15, 456.45, 285, 171.45, 37.6],
  ['Riverbend Media', 10, 325, 0, 3250, 1850, 1400, 43.1],
  ['Harbor & Finch', 5, 149, 5, 707.75, 360, 347.75, 49.1],
  ['Cedar Studio', 12, 89, 10, 961.2, 456, 505.2, 52.6, 'Europe', 'Travel keyboard'],
];
const money = v => v === '' ? '' : '$' + v.toLocaleString('en-US', { minimumFractionDigits: 2 });
const esc = s => s.replace('&', '&amp;');
const body = document.getElementById('rows');

// Header row: columns with a filter button in each cell
const fields = ['Order', 'Date', 'Month', 'Customer', 'Region', 'Product', 'Units', 'Price', 'Discount', 'Net', 'Cost', 'Profit', 'Margin'];
body.insertAdjacentHTML('beforeend', '<tr class="heads"><th>4</th>' + fields.map(f =>
  `<td class="field${f === 'Region' ? ' raised' : ''}"><div><span>${f}</span><button aria-label="Filter ${f}"${f === 'Customer' ? ' class="live"' : ''}><i class="caret"></i></button></div></td>`
).join('') + '<td class="out"></td><td class="out"></td></tr>');

rows.forEach(([who, units, price, disc, net, cost, profit, margin, region = '', product = ''], i) => {
  const n = String(i + 1).padStart(2, '0');
  const month = i < 20 ? 'Jan' : 'Feb';
  const hang = s => /[gyp]/.test(s) ? ' class="raised"' : '';
  const bar = net === '' ? '' : `<i style="width:${Math.round(net / 32.1)}px"></i>`;
  body.insertAdjacentHTML('beforeend', `<tr${i % 2 ? '' : ' class="band"'}><th>${i + 5}</th>
    <td>NS-26-00${n}</td><td class="num">${n} ${month} 2026</td><td>${month}</td>
    <td${hang(who)}>${esc(who)}</td><td${hang(region)}>${region}</td><td${hang(product)}>${product}</td>
    <td class="num input">${units}</td><td class="num">${money(price)}</td>
    <td class="num input">${disc === '' ? '' : disc === 15 ? '<b>15%</b>' : disc + '%'}</td>
    <td class="num barcell">${bar}<span>${money(net)}</span></td><td class="num">${money(cost)}</td>
    <td class="num">${money(profit)}</td><td class="num edge">${margin === '' ? '' : margin.toFixed(1) + '%'}</td>
    <td class="out"></td><td class="out"></td></tr>`);
});

const sheets = [['Overview', '#1b3b57'], ['Orders', '#17556d'], ['Monthly', '#1b7268'], ['Trends', '#745088'], ['Products', '#745088'],
  ['Inventory', '#8a5a28'], ['Forecast', '#344a80'], ['Invoice', '#264f72'], ['Workflow', '#1c4f60']];
document.getElementById('strip').innerHTML = sheets.map(([name, color]) =>
  `<button${name === 'Orders' ? ' class="current"' : ''}><div class="mark" style="border-color:${color}"><svg width="24" height="25"><use href="#sheet"/></svg><span>${name}</span></div></button>`).join('');

const people = ['(Select All)', 'Alpine Design', 'Atlas Research', 'Bluebird Logistics', 'Cedar Studio', 'Greenfield Energy', 'Harbor & Finch', 'Northwind Labs', 'Riverbend Media'];
document.getElementById('list').innerHTML = people.map(p => `<label><input type="checkbox" checked>${esc(p)}</label>`).join('');

// Data bar presets: one icon per colour, faded to the right in the gradient set
const colors = [['Blue', '#638ec6'], ['Green', '#63be7b'], ['Red', '#f8696b'], ['Orange', '#ffb628'], ['Light blue', '#00aef0'], ['Purple', '#bf4fbf']];
const swatch = ([name, c], fade) => `<button aria-label="${name}"><svg width="34" height="34" viewBox="0 0 34 34">
  <linearGradient id="g${c.slice(1)}"><stop stop-color="${c}"/><stop offset="1" stop-color="${c}" stop-opacity=".15"/></linearGradient>
  <path d="M1 1h11v11H1zM22.500 22.500H33V33H22.500z" fill="#b5d7f1"/>
  <path d="M1 12h32v10.500H1z" fill="${fade ? `url(#g${c.slice(1)})` : c}"/><use href="#rules"/></svg></button>`;
document.getElementById('gradient').innerHTML = colors.map(c => swatch(c, true)).join('');
document.getElementById('solid').innerHTML = colors.map(c => swatch(c, false)).join('');
```
